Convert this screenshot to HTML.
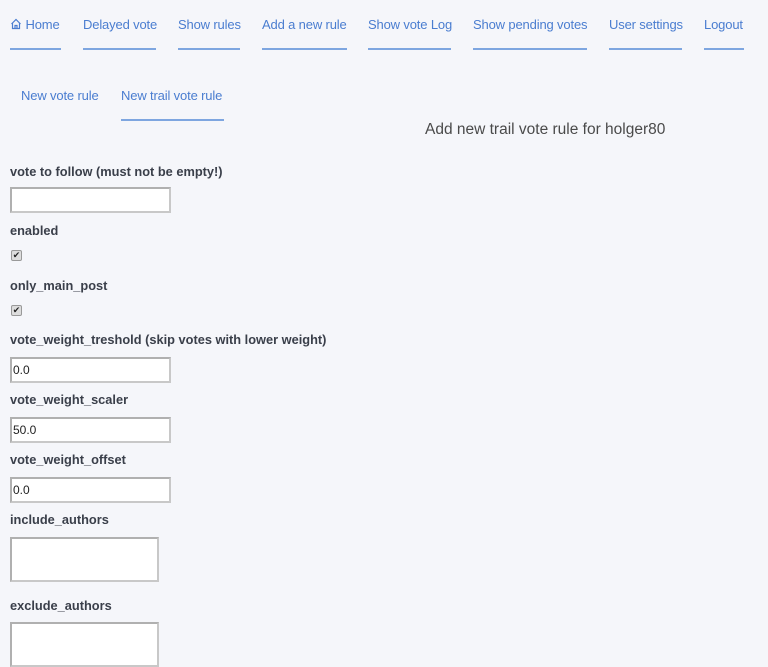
<!DOCTYPE html>
<html><head><meta charset="utf-8"><style>
html,body{margin:0;padding:0;width:768px;height:667px;overflow:hidden;background:#f5f6fa;font-family:"Liberation Sans",sans-serif;}
a{position:absolute;color:#4a7dd0;font-size:13px;text-decoration:none;white-space:nowrap;letter-spacing:-0.15px}
.u{position:absolute;height:2px;background:#7ea6e0}
.l{position:absolute;left:10px;font-weight:bold;font-size:12.8px;color:#3a3f4a;letter-spacing:0;white-space:nowrap}
.i{position:absolute;left:10px;width:156px;height:22px;background:#fff;border:2px solid #c8c8c8;border-top-color:#b0b0b0;border-left-color:#b0b0b0;font-size:12px;color:#222;line-height:22px;padding-left:1px;box-sizing:content-box}
.c{position:absolute;left:11px;width:9px;height:9px;border:1px solid #999;background:#ddd;border-radius:2px;font-size:9px;line-height:9px;text-align:center;color:#222}
.t{position:absolute;left:10px;width:145px;height:41px;background:#fff;border:2px solid #c8c8c8;border-top-color:#b0b0b0;border-left-color:#b0b0b0}
h2{position:absolute;left:425px;top:121px;margin:0;font-weight:normal;font-size:15.5px;color:#4a4a4a;white-space:nowrap}
</style></head><body>
<a style="left:10px;top:17px"><svg width="12" height="12" viewBox="0 0 12 12" style="vertical-align:-1px"><path d="M1.5 6 L6 1.5 L10.5 6 M2.5 5 V10.5 H9.5 V5 M5 10.5 V7.5 H7 V10.5" fill="none" stroke="#4a7dd0" stroke-width="1.2"/></svg> Home</a><div class="u" style="left:10px;top:48px;width:51px"></div>
<a style="left:83px;top:17px">Delayed vote</a><div class="u" style="left:83px;top:48px;width:73px"></div>
<a style="left:178px;top:17px">Show rules</a><div class="u" style="left:178px;top:48px;width:62px"></div>
<a style="left:262px;top:17px">Add a new rule</a><div class="u" style="left:262px;top:48px;width:85px"></div>
<a style="left:368px;top:17px">Show vote Log</a><div class="u" style="left:368px;top:48px;width:83px"></div>
<a style="left:473px;top:17px">Show pending votes</a><div class="u" style="left:473px;top:48px;width:114px"></div>
<a style="left:609px;top:17px">User settings</a><div class="u" style="left:609px;top:48px;width:73px"></div>
<a style="left:704px;top:17px">Logout</a><div class="u" style="left:704px;top:48px;width:40px"></div>
<a style="left:21px;top:88px">New vote rule</a>
<a style="left:121px;top:88px">New trail vote rule</a><div class="u" style="left:121px;top:119px;width:103px"></div>
<h2>Add new trail vote rule for holger80</h2>
<div class="l" style="top:164px">vote to follow (must not be empty!)</div>
<div class="i" style="top:187px"></div>
<div class="l" style="top:223px">enabled</div>
<div class="c" style="top:250px">✔</div>
<div class="l" style="top:278px">only_main_post</div>
<div class="c" style="top:305px">✔</div>
<div class="l" style="top:332px">vote_weight_treshold (skip votes with lower weight)</div>
<div class="i" style="top:357px">0.0</div>
<div class="l" style="top:392px">vote_weight_scaler</div>
<div class="i" style="top:417px">50.0</div>
<div class="l" style="top:452px">vote_weight_offset</div>
<div class="i" style="top:477px">0.0</div>
<div class="l" style="top:512px">include_authors</div>
<div class="t" style="top:537px"></div>
<div class="l" style="top:598px">exclude_authors</div>
<div class="t" style="top:622px"></div>
</body></html>
